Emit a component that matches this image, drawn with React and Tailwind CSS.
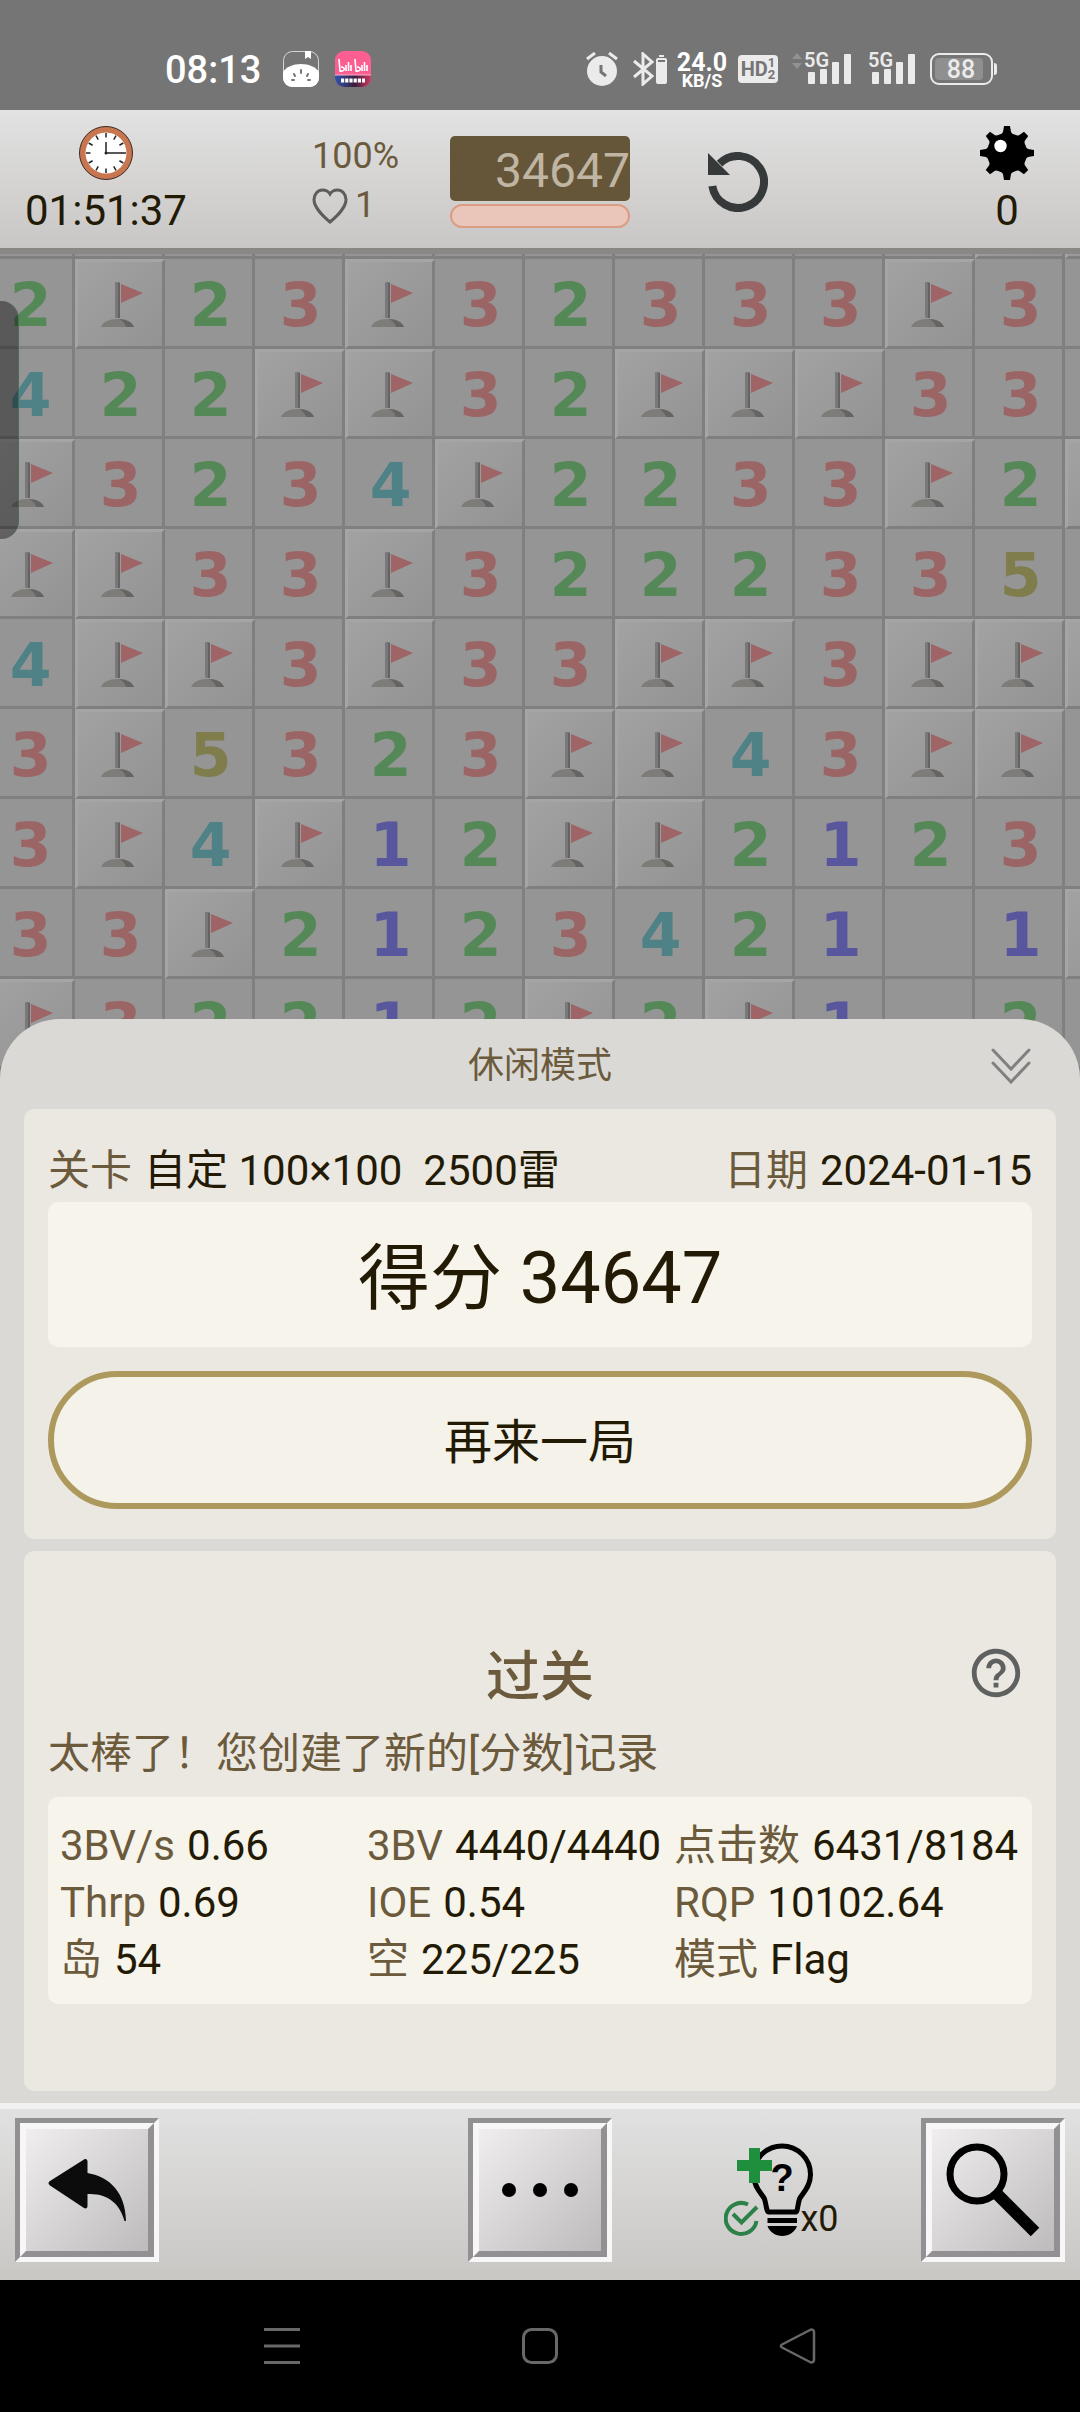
import { useState } from "react";
import { MdHelpOutline } from "react-icons/md";

// F = 旗子，# = 未翻开，空格 = 空白格
const BOARD = [
  "2F23F32333F3 ",
  "422FF32FFF33 ",
  "F3234F2233F2#",
  "FF33F3222335 ",
  "4FF3F33FF3FF#",
  "3F5323FF43FF ",
  "3F4F12FF2123 ",
  "33F2123421 1#",
  "F32212F2F1 2 ",
];
const TOP_ROW = "           ##";

const COLORS = {
  1: "text-[#58569c]",
  2: "text-[#548856]",
  3: "text-[#9c6565]",
  4: "text-[#4f8287]",
  5: "text-[#7f7d4c]",
};

const STATS = [
  ["3BV/s", "0.66"],
  ["3BV", "4440/4440"],
  ["点击数", "6431/8184"],
  ["Thrp", "0.69"],
  ["IOE", "0.54"],
  ["RQP", "10102.64"],
  ["岛", "54"],
  ["空", "225/225"],
  ["模式", "Flag"],
];

function FlagIcon() {
  return (
    <svg viewBox="0 0 84 84" className="size-[84px]" aria-hidden="true">
      <path d="M23 65c2-5 8-8 16-8 9 0 15 3 17 8z" fill="#7d7c79" />
      <path d="M40 57c9 0 14 3 16 8h-8c-1-4-4-7-8-8z" fill="#656463" />
      <rect x="37" y="20" width="5" height="36" rx="1" fill="#7a7878" />
      <rect x="40" y="21" width="2" height="35" fill="#646262" />
      <path d="M43 22l22 9-22 10z" fill="#9e6466" />
    </svg>
  );
}

function Cell({ value }) {
  if (value === "F" || value === "#") {
    return (
      <div className="size-[90px] border-3 border-t-[#a5a5a5] border-l-[#a5a5a5] border-r-[#7f7f7f] border-b-[#7f7f7f] bg-linear-to-br from-[#a2a2a2] to-[#939393]">
        {value === "F" && <FlagIcon />}
      </div>
    );
  }
  return (
    <div
      className={`flex size-[90px] items-center justify-center border-r-3 border-b-3 border-[#808080] bg-[#959595] pt-1 pl-1 font-['DejaVu_Sans'] text-[60px] leading-none font-bold ${COLORS[value] || ""}`}
    >
      {value.trim()}
    </div>
  );
}

function SignalIcon() {
  return (
    <div className="relative">
      <svg viewBox="0 0 48 34" className="h-[34px] w-12" fill="#ebebeb" aria-hidden="true">
        <rect x="4" y="20" width="7" height="12" rx="1" />
        <rect x="16" y="17" width="7" height="15" rx="1" />
        <rect x="28" y="10" width="7" height="22" rx="1" />
        <rect x="40" y="2" width="7" height="30" rx="1" />
      </svg>
      <span className="absolute -top-1 left-0 text-[20px] leading-6 font-semibold text-[#ebebeb]">5G</span>
    </div>
  );
}

function StatusBar() {
  return (
    <div className="flex h-[110px] items-center justify-between bg-[#757575] pt-7 pr-[83px] pl-[165px] text-white">
      <div className="flex items-center">
        <span className="pt-0.5 text-[38px] leading-10 font-medium">08:13</span>
        <svg viewBox="0 0 36 36" className="ml-[22px] size-9" aria-hidden="true">
          <rect x="0.5" y="0.5" width="35" height="35" rx="9" fill="none" stroke="#d5d5d5" />
          <path d="M0 21c3-5 10-8 18-8s15 3 18 8v6a9 9 0 0 1-9 9H9a9 9 0 0 1-9-9z" fill="#fff" />
          <path d="M22 0h6v8l-3-2-3 2z" fill="#fff" />
          <g stroke="#757575" strokeWidth="2" strokeLinecap="round">
            <path d="M18 19v3M11 23l1 2M25 23l-1 2M9 29h2M27 29h-2" />
          </g>
        </svg>
        <svg viewBox="0 0 36 36" className="ml-4 size-9" aria-hidden="true">
          <defs>
            <linearGradient id="biliBase" x1="0" x2="1">
              <stop offset="0" stopColor="#2f55b0" />
              <stop offset="0.55" stopColor="#3a1c3c" />
              <stop offset="1" stopColor="#d23a62" />
            </linearGradient>
          </defs>
          <rect width="36" height="36" rx="9" fill="#fb5f92" />
          <path d="M0 24h36v3a9 9 0 0 1-9 9H9a9 9 0 0 1-9-9z" fill="url(#biliBase)" />
          <path d="M0 24h36" stroke="#f8b5cb" />
          <g fill="none" stroke="#fff" strokeWidth="1.6">
            <path d="M4 8l1 12c5 1 6-4 1-4M11 14v6M13.5 11v9M16 14v6M20 8l1 12c5 1 6-4 1-4M27 14v6M29.5 11v9M32 14v6" />
            <path d="M6 29.5h24" strokeWidth="4" strokeDasharray="3.2 1" />
          </g>
        </svg>
      </div>

      <div className="flex items-center">
        <svg viewBox="0 0 32 34" className="h-[34px] w-8" aria-hidden="true">
          <circle cx="16" cy="19" r="15" fill="#ebebeb" />
          <path d="M1 7l8-6M31 7l-8-6" stroke="#ebebeb" strokeWidth="3" />
          <path d="M15 13v7l5 4" fill="none" stroke="#757575" strokeWidth="3" />
        </svg>
        <svg viewBox="0 0 36 34" className="ml-3.5 h-[34px] w-9" aria-hidden="true">
          <path d="M2 9l18 15-9 8V2l9 8L2 25" fill="none" stroke="#ebebeb" strokeWidth="3" />
          <rect x="24" y="6" width="11" height="26" rx="2" fill="#ebebeb" />
          <rect x="27" y="3" width="5" height="2" fill="#ebebeb" />
          <path d="M26 9h7" stroke="#757575" strokeWidth="2" />
        </svg>
        <div className="ml-2 flex w-[52px] flex-col items-center pt-1 font-bold">
          <span className="text-[25px] leading-5">24.0</span>
          <span className="text-[18px] leading-4">KB/S</span>
        </div>
        <div className="ml-2.5 flex h-7 w-10 items-center justify-center rounded bg-[#ebebeb] font-bold text-[#757575]">
          <span className="text-[20px] leading-7">HD</span>
          <span className="flex flex-col text-[13px] leading-3">
            <span>1</span>
            <span>2</span>
          </span>
        </div>
        <svg viewBox="0 0 10 16" className="mr-0.5 mb-4 ml-3.5 h-4 w-2.5" fill="#929292" aria-hidden="true">
          <path d="M0 6l5-6 5 6zM0 10l5 6 5-6z" />
        </svg>
        <SignalIcon />
        <div className="ml-4">
          <SignalIcon />
        </div>
        <div className="ml-3.5 flex h-8 w-[63px] rounded-[9px] border-2 border-[#ebebeb] p-[3px]">
          <span className="flex w-12 items-center justify-center rounded-[4px] bg-[#8f8f8f] pl-1 text-[25px] leading-none font-medium text-[#ebebeb]">
            88
          </span>
        </div>
        <span className="ml-px h-3 w-[3px] rounded-r bg-[#ebebeb]" />
      </div>
    </div>
  );
}

function ClockIcon() {
  const ticks = [0, 30, 60, 90, 120, 150, 180, 210, 240, 270, 300, 330];
  return (
    <svg viewBox="0 0 54 54" className="size-[54px]" aria-hidden="true">
      <circle cx="27" cy="27" r="26.5" fill="#c87650" stroke="#3c2a24" />
      <circle cx="27" cy="27" r="20.5" fill="#fff" />
      <g stroke="#222" strokeWidth="1.5">
        {ticks.map((angle) => (
          <path key={angle} d="M27 7v4.5" transform={`rotate(${angle} 27 27)`} />
        ))}
        <path d="M27 16v11h16" fill="none" />
      </g>
      <circle cx="27" cy="27" r="1.5" fill="#222" />
    </svg>
  );
}

function MineIcon() {
  const spikes = [0, 45, 90, 135, 180, 225, 270, 315];
  return (
    <svg viewBox="0 0 54 54" className="size-[54px]" aria-hidden="true">
      <circle cx="27" cy="27" r="20" />
      {spikes.map((angle) => (
        <path key={angle} d="M24 0h6l1 6 4 5H19l4-5z" transform={`rotate(${angle} 27 27)`} />
      ))}
      <circle cx="20.5" cy="20" r="6.2" fill="#fff" />
    </svg>
  );
}

function Toolbar() {
  return (
    <div className="flex h-[138px] items-start bg-linear-to-b from-[#e2e2e2] to-[#c9c7c5] pr-[46px] pl-6">
      <div className="flex w-[164px] flex-col items-center pt-4">
        <ClockIcon />
        <span className="text-[42px] leading-[62px] text-[#231a05]">01:51:37</span>
      </div>
      <div className="ml-[124px] w-[90px] pt-[22px] text-[36px] leading-[49px] text-[#6b5a3c]">
        <div>100%</div>
        <div className="flex items-center gap-[7px]">
          <svg viewBox="0 0 36 36" className="size-9" aria-hidden="true">
            <path
              d="M18 34C11 28 2 20 2 11.5 2 6 6 2 10.5 2c3 0 6 1.5 7.5 4C19.5 3.5 22.5 2 25.5 2 30 2 34 6 34 11.5 34 20 25 28 18 34z"
              fill="none"
              stroke="#5d5d5d"
              strokeWidth="3"
            />
          </svg>
          <span>1</span>
        </div>
      </div>
      <div className="ml-12 w-[180px] pt-[26px]">
        <div className="rounded-[5px] bg-[#65563a] pt-1 text-right text-[48px] leading-[61px] text-[#c0b5a2]">
          34647
        </div>
        <div className="mt-[3px] h-6 rounded-full border-2 border-[#dc9c84] bg-[#eac6ba]" />
      </div>
      <button type="button" aria-label="重新开始" className="mt-[42px] ml-[78px]">
        <svg viewBox="0 0 60 60" className="size-[60px]" aria-hidden="true">
          <path d="M11.6 11.6A26 26 0 1 1 4.3 34" fill="none" stroke="#353939" strokeWidth="8" />
          <path d="M0 1v22h22z" fill="#353939" />
        </svg>
      </button>
      <div className="ml-auto flex flex-col items-center pt-4">
        <MineIcon />
        <span className="text-[42px] leading-[62px] text-[#231a05]">0</span>
      </div>
    </div>
  );
}

function Board() {
  return (
    <div className="relative overflow-hidden">
      <div className="-ml-[15px] flex h-[11px] items-end overflow-hidden">
        {TOP_ROW.split("").map((value, i) => (
          <div key={i} className="shrink-0">
            <Cell value={value} />
          </div>
        ))}
      </div>
      {BOARD.map((row, y) => (
        <div key={y} className="-ml-[15px] flex">
          {row.split("").map((value, x) => (
            <div key={x} className="shrink-0">
              <Cell value={value} />
            </div>
          ))}
        </div>
      ))}
      <div className="absolute inset-x-0 top-0 h-1.5 bg-[#8a8885]" />
      <div className="absolute top-[53px] left-0 h-[238px] w-[19px] rounded-r-[18px] border-r border-[#4c6b58] bg-black/40" />
    </div>
  );
}

function Label({ children }) {
  return <span className="text-[#6b5a3c]">{children}</span>;
}

function ResultSheet({ onClose }) {
  return (
    <section className="relative -mt-[50px] flex-1 rounded-t-[60px] bg-[#dad9d5] px-6 pb-3 text-[42px] leading-[57px] text-[#231a05]">
      <header className="relative flex h-[90px] items-center justify-center pt-1">
        <h1 className="text-[36px] text-[#6b5a3c]">休闲模式</h1>
        <button type="button" aria-label="收起" onClick={onClose} className="absolute right-6">
          <svg viewBox="0 0 42 36" className="h-9 w-[42px]" fill="none" stroke="#808080" strokeWidth="3" strokeLinecap="round" aria-hidden="true">
            <path d="M3 2l18 19L39 2M3 15l18 19 18-19" />
          </svg>
        </button>
      </header>

      <div className="rounded-[10px] bg-[#ebe8e1] px-6 pt-[33px] pb-[30px]">
        <div className="flex justify-between pb-[3px]">
          <p className="flex gap-3">
            <Label>关卡</Label>
            <span className="whitespace-pre">自定 100×100  2500雷</span>
          </p>
          <p className="flex gap-3">
            <Label>日期</Label>
            <span>2024-01-15</span>
          </p>
        </div>
        <div className="rounded-[10px] bg-[#f6f4eb] pt-2 text-center text-[72px] leading-[137px]">得分 34647</div>
        <button
          type="button"
          className="mt-6 h-[138px] w-full rounded-full border-6 border-[#ad995c] bg-[#f5f2e9] pt-1 text-[48px]"
        >
          再来一局
        </button>
      </div>

      <div className="mt-3 rounded-[10px] bg-[#ebe8e1] px-6 pt-[82px] pb-[87px]">
        <div className="relative flex h-20 items-center justify-center">
          <h2 className="pt-2 text-[54px] font-medium text-[#6b5a3c]">过关</h2>
          <button type="button" aria-label="帮助" className="absolute right-[7px]">
            <MdHelpOutline className="size-[58px] text-[#5f6060]" />
          </button>
        </div>
        <p className="pt-3 pb-[15px] text-[#6b5a3c]">太棒了！您创建了新的[分数]记录</p>
        <dl className="grid grid-cols-[1fr_1fr_346px] rounded-[10px] bg-[#f6f4eb] px-3 pt-5 pb-4">
          {STATS.map(([name, value]) => (
            <div key={name} className="flex gap-3 whitespace-nowrap">
              <dt className="text-[#6b5a3c]">{name}</dt>
              <dd>{value}</dd>
            </div>
          ))}
        </dl>
      </div>
    </section>
  );
}

function BevelButton({ label, children }) {
  return (
    <button
      type="button"
      aria-label={label}
      className="relative size-36 border-5 border-t-[#929092] border-l-[#929092] border-r-[#f8f7f7] border-b-[#f8f7f7]"
    >
      <span className="block size-full border-6 border-t-[#f8f7f7] border-l-[#f8f7f7] border-r-[#929092] border-b-[#929092] bg-linear-to-br from-[#f0eeee] to-[#bdbbbc]" />
      <svg viewBox="5 5 134 134" className="absolute inset-0 size-full" aria-hidden="true">
        {children}
      </svg>
    </button>
  );
}

function HintIcon() {
  return (
    <svg viewBox="0 0 90 94" className="h-[94px] w-[90px] shrink-0" aria-hidden="true">
      <path
        d="M44.5 69h27.5c1.5 0 2-9 3.5-13 2-5 11-11 11-24.5a28.5 28.5 0 0 0-57 0c0 13.5 9 19.5 11 24.5 1.5 4 2 13 4 13z"
        fill="none"
        stroke="#000"
        strokeWidth="5"
      />
      <path d="M43.5 75h29.5v5H43.5zM43.5 83h29.5c-2 6-8 10-14.7 10S45.5 89 43.5 83z" />
      <text x="58" y="48" textAnchor="middle" fontSize="38" fontWeight="700" fontFamily="Liberation Sans, sans-serif">?</text>
      <path d="M25 5h11v12h12v11H36v12H25V28H13V17h12z" fill="#1f8f3e" />
      <g fill="none" stroke="#2b8148" strokeWidth="4">
        <path d="M24 61.5A15.5 15.5 0 1 0 32.5 78" />
        <path d="M9 71l8.5 8.5L33 64" />
      </g>
    </svg>
  );
}

function BottomBar() {
  return (
    <div className="relative flex justify-between border-t-6 border-[#f2f1f1] bg-linear-to-b from-[#e1e1e1] to-[#c9c7c4] px-[15px] pt-[9px] pb-[18px]">
      <BevelButton label="返回">
        <path
          d="M35 63L69 41.5c2-1 3.5 0 3.5 2V55c23 4 38 20 38.5 48h-1.5C105 86 93 75 72.5 76v12c0 2-1.5 3-3.5 2L35 67.5c-2-1.5-2-3.5 0-4.5z"
          fill="#0c0c0c"
        />
      </BevelButton>
      <div className="w-36" />
      <BevelButton label="更多">
        <circle cx="41" cy="72" r="7" />
        <circle cx="72" cy="72" r="7" />
        <circle cx="103" cy="72" r="7" />
      </BevelButton>
      <button type="button" className="flex w-36 items-center justify-end">
        <HintIcon />
        <span className="-ml-3.5 self-end pb-4 text-[36px] leading-[54px] text-[#231a05]">x0</span>
      </button>
      <BevelButton label="缩放">
        <circle cx="56" cy="56" r="27" fill="none" stroke="#000" strokeWidth="7" />
        <path d="M75 75l39 39" stroke="#000" strokeWidth="12" />
      </BevelButton>
    </div>
  );
}

function NavBar() {
  return (
    <nav className="grid h-[132px] grid-cols-3 place-items-center bg-black px-[153px]">
      <button type="button" aria-label="最近任务">
        <svg viewBox="0 0 38 38" className="size-[38px]" stroke="#686868" strokeWidth="3" aria-hidden="true">
          <path d="M1 2.5h36M1 19h36M1 35.5h36" />
        </svg>
      </button>
      <button type="button" aria-label="主页">
        <svg viewBox="0 0 38 38" className="size-[38px]" fill="none" stroke="#686868" strokeWidth="3" aria-hidden="true">
          <rect x="2.5" y="2.5" width="33" height="33" rx="8" />
        </svg>
      </button>
      <button type="button" aria-label="返回上一页">
        <svg viewBox="0 0 38 38" className="size-[38px]" fill="none" stroke="#686868" strokeWidth="2.5" strokeLinejoin="round" aria-hidden="true">
          <path d="M3 17.5L31 3c2-1 4 0 4 2v28c0 2-2 3-4 2L3 20.5c-1.5-1-1.5-2 0-3z" />
        </svg>
      </button>
    </nav>
  );
}

function App() {
  const [open, setOpen] = useState(true);

  return (
    <div className="flex min-h-screen flex-col overflow-hidden bg-[#8c8c8c] font-[Roboto,'Noto_Sans_CJK_SC',sans-serif]">
      <StatusBar />
      <Toolbar />
      <Board />
      {open && <ResultSheet onClose={() => setOpen(false)} />}
      <BottomBar />
      <NavBar />
    </div>
  );
}

export default App;
